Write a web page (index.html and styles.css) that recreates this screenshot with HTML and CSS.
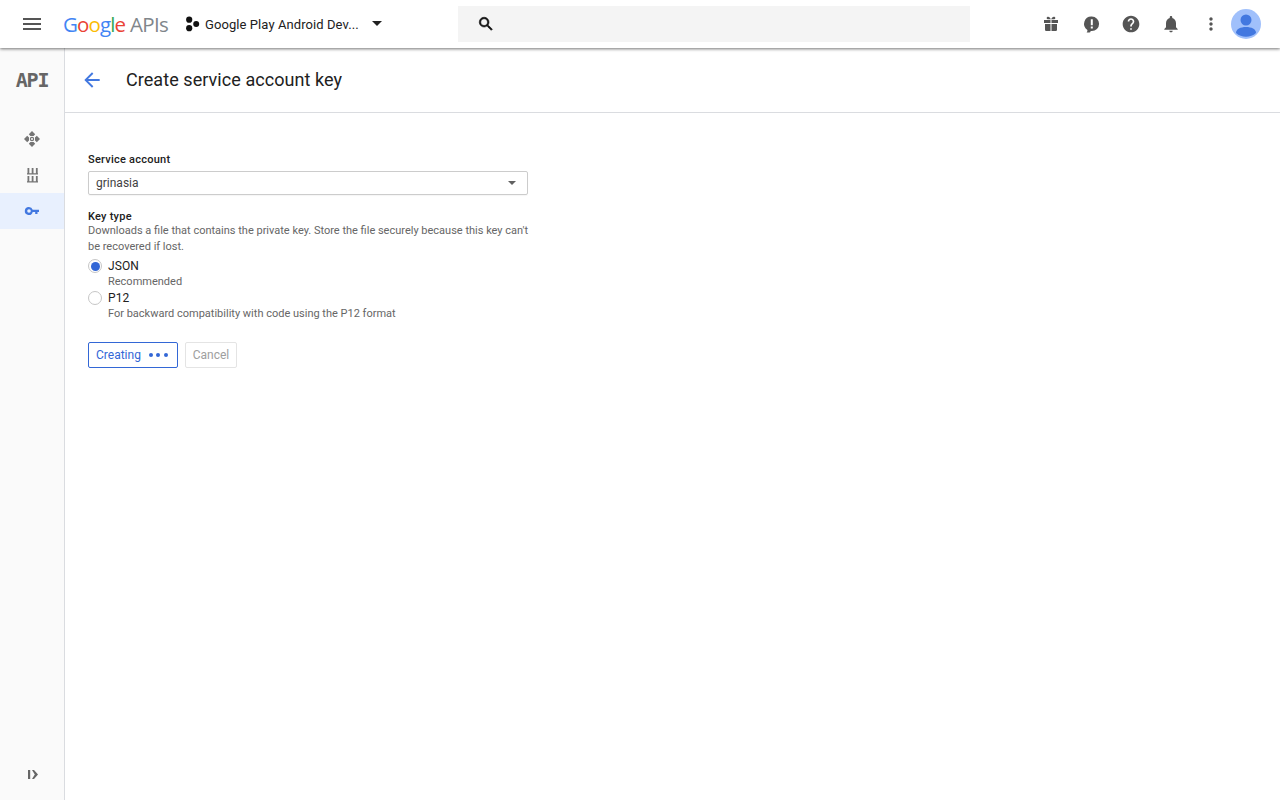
FILE: index.html
```html
<!DOCTYPE html>
<html lang="en">
<head>
<meta charset="utf-8">
<title>Create service account key</title>
<link rel="stylesheet" href="styles.css">
</head>
<body>
<header class="topbar">
  <button class="menu-btn" aria-label="Menu"><svg width="24" height="24" viewBox="0 0 24 24"><path fill="#555" d="M3 18h18v-2H3v2zm0-5h18v-2H3v2zm0-7v2h18V6H3z"/></svg></button>
  <div class="logo"><span class="lg-g">G</span><span class="lg-r">o</span><span class="lg-y">o</span><span class="lg-g">g</span><span class="lg-n">l</span><span class="lg-r">e</span><span class="lg-apis">APIs</span></div>
  <div class="project">
    <svg class="project-icon" width="16" height="16" viewBox="0 0 16 16"><circle cx="4.200" cy="3.700" r="3.100" fill="#111"/><circle cx="4.200" cy="12.200" r="3.100" fill="#111"/><circle cx="11.200" cy="8" r="3" fill="#111"/></svg>
    <span class="project-name">Google Play Android Dev...</span>
    <span class="caret-dark"></span>
  </div>
  <div class="search"><svg width="18" height="18" viewBox="0 0 24 24"><path fill="#111" d="M15.5 14h-.79l-.28-.27A6.47 6.47 0 0 0 16 9.5 6.5 6.5 0 1 0 9.5 16c1.61 0 3.09-.59 4.23-1.57l.27.28v.79l5 4.99L20.49 19l-4.99-5zm-6 0C7.01 14 5 11.99 5 9.5S7.01 5 9.5 5 14 7.01 14 9.5 11.99 14 9.5 14z" stroke="#111" stroke-width=".8"/></svg></div>
  <div class="actions">
    <span class="action"><svg width="18" height="18" viewBox="0 0 18 18"><path fill="#555" d="M2 5h6.500v3H2zM9.500 5H16v3H9.500zM3 9h5.500v7H4.200A1.200 1.200 0 0 1 3 14.800zM9.500 9H15v5.800a1.200 1.200 0 0 1-1.200 1.200H9.500zM5.500 1.800c1.300-.6 2.600.5 3.500 2.700 .9-2.200 2.200-3.300 3.500-2.700 1.400.7 1 2.500-.4 2.500H5.900c-1.400 0-1.800-1.800-.4-2.500z"/></svg></span>
    <span class="action"><svg width="18" height="18" viewBox="0 0 18 18"><path fill="#555" fill-rule="evenodd" d="M9.800 1.500a7.300 7.300 0 0 1 0 14.600H8.500v1l-1 .3c-1.100.2-2 .2-3-.1.700-.6 1-1.300.9-2.400A7.300 7.300 0 0 1 9.800 1.500zM8.800 4.300v6h2v-6zm0 7.300v2h2v-2z"/></svg></span>
    <span class="action"><svg width="20" height="20" viewBox="0 0 24 24"><path fill="#555" d="M12 2C6.480 2 2 6.480 2 12s4.480 10 10 10 10-4.480 10-10S17.520 2 12 2zm1 17h-2v-2h2v2zm2.070-7.750l-.9.920C13.450 12.900 13 13.500 13 15h-2v-.5c0-1.100.45-2.100 1.170-2.830l1.240-1.260c.37-.36.590-.86.590-1.410 0-1.100-.9-2-2-2s-2 .9-2 2H8c0-2.210 1.790-4 4-4s4 1.790 4 4c0 .88-.36 1.680-.93 2.250z"/></svg></span>
    <span class="action"><svg width="20" height="20" viewBox="0 0 24 24"><path fill="#555" d="M12 22c1.100 0 2-.9 2-2h-4c0 1.100.9 2 2 2zm6-6v-5c0-3.070-1.630-5.640-4.500-6.320V4c0-.83-.67-1.500-1.500-1.500s-1.500.67-1.500 1.500v.68C7.640 5.360 6 7.920 6 11v5l-2 2v1h16v-1l-2-2z"/></svg></span>
    <span class="action"><svg width="20" height="20" viewBox="0 0 24 24"><path fill="#555" d="M12 8c1.100 0 2-.9 2-2s-.9-2-2-2-2 .9-2 2 .9 2 2 2zm0 2c-1.100 0-2 .9-2 2s.9 2 2 2 2-.9 2-2-.9-2-2-2zm0 6c-1.100 0-2 .9-2 2s.9 2 2 2 2-.9 2-2-.9-2-2-2z"/></svg></span>
    <span class="avatar"><svg width="30" height="30" viewBox="0 0 30 30"><circle cx="15" cy="15" r="15" fill="#a0c0fb"/><circle cx="15" cy="11" r="5.500" fill="#4278e0"/><path fill="#4278e0" d="M5 24c0-4 4.500-6 10-6s10 2 10 6a15 15 0 0 1-20 0z"/></svg></span>
  </div>
</header>

<div class="shell">
  <aside class="sidebar">
    <div class="api-badge">API</div>
    <nav class="nav">
      <a class="nav-item"><svg width="18" height="18" viewBox="0 0 18 18"><path fill="#757575" fill-rule="evenodd" d="M9 1 12.200 4.200 10.600 6H7.400L5.800 4.200zM9 17 5.800 13.800 7.400 12h3.200l1.600 1.800zM1 9 4.200 5.800 6 7.400v3.200L4.200 12.200zM17 9 13.800 12.200 12 10.600V7.400l1.800-1.600zM9 6.800a2.200 2.200 0 1 0 0 4.400 2.200 2.200 0 0 0 0-4.400zM9 8a1 1 0 1 1 0 2 1 1 0 0 1 0-2z"/></svg></a>
      <a class="nav-item"><svg width="18" height="18" viewBox="0 0 18 18"><path fill="#757575" d="M4.500 2h1.800v5.200H4.500zM8.700 2h1.800v5.200H8.700zM12.900 2h1.800v5.200h-1.800zM4 7.200h11v1.400H4zM4.500 10h1.800v5.200H4.500zM8.700 10h1.800v5.200H8.700zM12.900 10h1.800v5.200h-1.800zM4 15.200h11v1.400H4z"/></svg></a>
      <a class="nav-item active"><svg width="18" height="18" viewBox="0 0 18 18"><path fill="#4278e0" fill-rule="evenodd" d="M6 5a4 4 0 0 1 3.700 2.700H16v2.200h-1.500V12h-2.300V9.900H9.700A4 4 0 1 1 6 5zm0 2.200a1.800 1.800 0 1 0 0 3.600 1.800 1.800 0 0 0 0-3.600z"/></svg></a>
    </nav>
    <div class="collapse"><svg width="14" height="14" viewBox="0 0 14 14"><path fill="#666" d="M3 3h2.200v9H3zM7 3h2l4 4.500-4 4.500H7l2.800-4.500z"/></svg></div>
  </aside>

  <main class="main">
    <div class="title-row">
      <svg class="back" width="24" height="24" viewBox="0 0 24 24"><path fill="#4278e0" d="M20 11H7.830l5.590-5.590L12 4l-8 8 8 8 1.410-1.410L7.830 13H20v-2z" transform="translate(12 12) scale(.96) translate(-12 -12)"/></svg>
      <h1 class="title">Create service account key</h1>
    </div>
    <form class="form">
      <div class="label service-label">Service account</div>
      <div class="select"><span>grinasia</span><span class="caret-gray"></span></div>
      <div class="label key-label">Key type</div>
      <p class="desc">Downloads a file that contains the private key. Store the file securely because this key can't be recovered if lost.</p>
      <div class="radio-row first">
        <span class="radio checked"></span>
        <div><div class="radio-title">JSON</div><div class="radio-sub">Recommended</div></div>
      </div>
      <div class="radio-row">
        <span class="radio"></span>
        <div><div class="radio-title">P12</div><div class="radio-sub">For backward compatibility with code using the P12 format</div></div>
      </div>
      <div class="buttons">
        <div class="btn btn-primary">Creating<span class="dots"><i></i><i></i><i></i></span></div>
        <div class="btn btn-disabled">Cancel</div>
      </div>
    </form>
  </main>
</div>
</body>
</html>
```

FILE: styles.css
```css
* { box-sizing: border-box; }
html, body { margin: 0; height: 100%; overflow: hidden; }
body { font-family: Roboto, "Liberation Sans", sans-serif; color: #212121; background: #fff; }

.topbar {
  height: 48px;
  display: flex;
  align-items: center;
  background: #fff;
  box-shadow: 0 1px 3px rgba(0,0,0,.55);
  position: relative;
  z-index: 2;
}
.menu-btn { width: 24px; height: 24px; margin-left: 20px; padding: 0; border: 0; background: none; display: flex; }
.logo { margin-left: 19px; width: 122px; font-family: "Open Sans", sans-serif; font-size: 20.500px; letter-spacing: -.9px; line-height: 48px; white-space: nowrap; }
.lg-g { color: #4285f4; }
.lg-r { color: #ea4335; }
.lg-y { color: #fbbc05; }
.lg-n { color: #34a853; }
.lg-apis { color: #80868b; margin-left: 5px; letter-spacing: -.7px; }
.project { display: flex; align-items: center; width: 273px; }
.project-icon { flex: none; }
.project-name { margin-left: 4px; font-size: 13px; letter-spacing: .08px; width: 168px; white-space: nowrap; color: #212121; }
.caret-dark { width: 0; height: 0; margin-left: -1px; border-left: 5px solid transparent; border-right: 5px solid transparent; border-top: 5px solid #212121; margin-top: -2px; }
.search { width: 512px; height: 36px; background: #f4f4f4; display: flex; align-items: center; padding-left: 19px; margin-top: -1px; }
.actions { flex: 1; display: flex; align-items: center; justify-content: flex-end; padding-right: 19px; }
.action { width: 40px; height: 40px; display: flex; align-items: center; justify-content: center; }
.avatar { width: 30px; height: 30px; display: flex; }

.shell { display: flex; height: 752px; }
.sidebar { width: 65px; flex: none; background: #fafafa; border-right: 1px solid #dadce0; display: flex; flex-direction: column; }
.api-badge { height: 64px; display: flex; align-items: center; justify-content: center; font-family: "DejaVu Sans Mono", monospace; font-weight: 700; font-size: 20px; color: #666; letter-spacing: -1.200px; }
.nav { padding-top: 9px; flex: 1; }
.nav-item { height: 36px; display: flex; align-items: center; justify-content: center; }
.nav-item.active { background: #e8f0fe; }
.collapse { height: 52px; display: flex; align-items: center; justify-content: center; }

.main { flex: 1; }
.title-row { height: 65px; display: flex; align-items: center; padding-left: 15px; border-bottom: 1px solid #dadce0; }
.back { flex: none; }
.title { margin: 0 0 0 22px; padding-bottom: 2px; font-size: 18px; font-weight: 400; letter-spacing: .06px; color: #212121; }

.form { padding: 40px 0 0 23px; width: 463px; }
.label { font-size: 11px; font-weight: 500; line-height: 14px; letter-spacing: .24px; color: #212121; }
.select { margin-top: 4px; width: 440px; height: 24px; border: 1px solid #ccc; border-radius: 2px; padding: 0 11px 0 7px; display: flex; align-items: center; justify-content: space-between; font-size: 12px; color: #424242; box-shadow: 0 1px 1px rgba(0,0,0,.04); }
.caret-gray { width: 0; height: 0; border-left: 4.500px solid transparent; border-right: 4.500px solid transparent; border-top: 4.500px solid #616161; }
.key-label { margin-top: 15px; }
.desc { margin: -1px 0 0; width: 442px; font-size: 11px; line-height: 16px; color: #666; }
.radio-row { display: flex; min-height: 32px; }
.radio-row.first { margin-top: 3px; }
.radio { width: 14px; height: 14px; margin: 1px 6px 0 0; border: 1px solid #c6c6c6; border-radius: 50%; flex: none; background: #fff; position: relative; }
.radio.checked::after { content: ""; position: absolute; left: 1.500px; top: 1.500px; width: 9px; height: 9px; border-radius: 50%; background: #3367d6; }
.radio-title { font-size: 12px; line-height: 16px; letter-spacing: .1px; color: #212121; }
.radio-sub { font-size: 11px; line-height: 16px; color: #666; }
.buttons { display: flex; gap: 7px; margin-top: 20px; }
.btn { height: 26px; display: flex; align-items: center; justify-content: center; font-size: 12px; border-radius: 2px; }
.btn-primary { width: 90px; border: 1px solid #3367d6; color: #3367d6; padding-left: 7px; justify-content: flex-start; }
.dots { display: flex; gap: 3.500px; margin-left: 8px; }
.dots i { width: 4px; height: 4px; border-radius: 50%; background: #3367d6; display: block; }
.btn-disabled { width: 52px; border: 1px solid #e4e4e4; color: #9e9e9e; }
```
